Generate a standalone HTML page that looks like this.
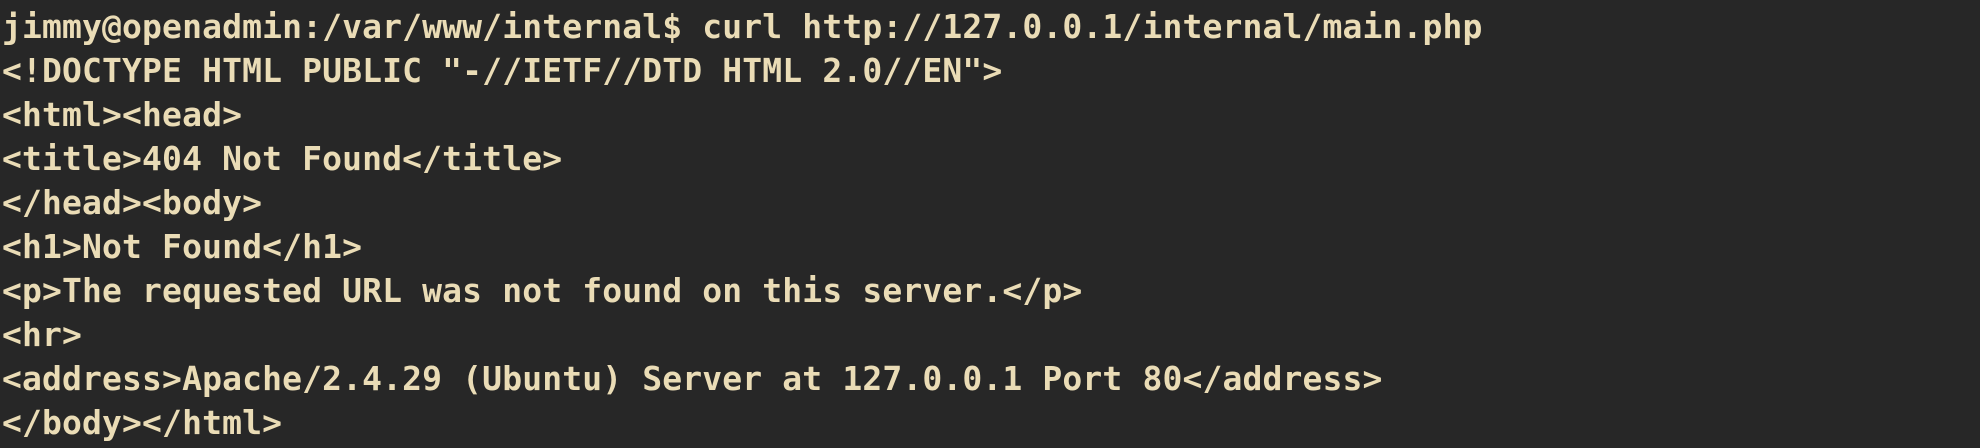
<!DOCTYPE html>
<html><head><style>
html,body{margin:0;padding:0;background:#272727;width:1980px;height:448px;overflow:hidden}
pre{margin:0;padding:4.5px 0 0 2px;font-family:"DejaVu Sans Mono","Liberation Mono",monospace;font-weight:bold;font-size:33px;letter-spacing:0.14px;line-height:44px;color:#eadcb6;white-space:pre}
</style></head><body><pre>jimmy@openadmin:/var/www/internal$ curl http://127.0.0.1/internal/main.php
&lt;!DOCTYPE HTML PUBLIC "-//IETF//DTD HTML 2.0//EN"&gt;
&lt;html&gt;&lt;head&gt;
&lt;title&gt;404 Not Found&lt;/title&gt;
&lt;/head&gt;&lt;body&gt;
&lt;h1&gt;Not Found&lt;/h1&gt;
&lt;p&gt;The requested URL was not found on this server.&lt;/p&gt;
&lt;hr&gt;
&lt;address&gt;Apache/2.4.29 (Ubuntu) Server at 127.0.0.1 Port 80&lt;/address&gt;
&lt;/body&gt;&lt;/html&gt;</pre></body></html>
